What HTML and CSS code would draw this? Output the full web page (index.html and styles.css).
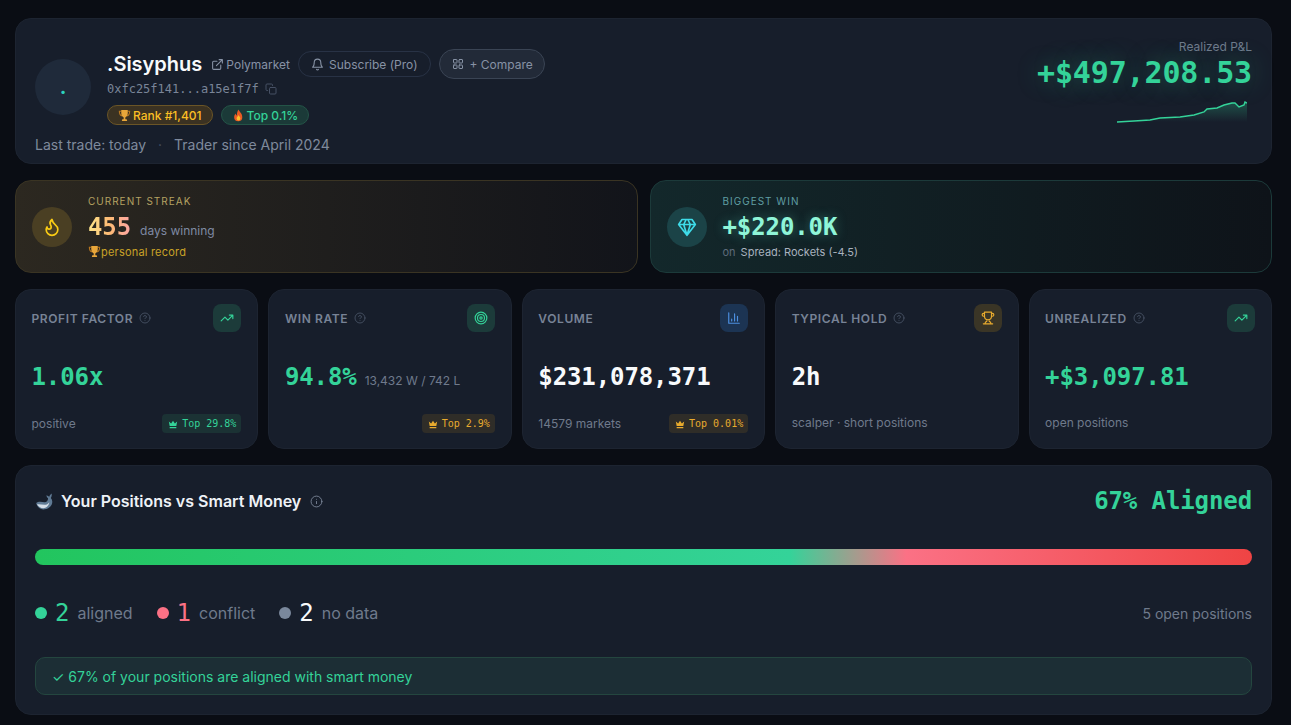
FILE: index.html
```html
<!DOCTYPE html>
<html lang="en">

<head>
    <meta charset="UTF-8">
    <title>.Sisyphus</title>
    <link rel="stylesheet" href="styles.css">
</head>

<body>
    <svg class="sprites" width="0" height="0">
        <symbol id="i-link" viewBox="0 0 24 24"><path d="M15 3h6v6M10 14 21 3M18 13v6a2 2 0 0 1-2 2H5a2 2 0 0 1-2-2V8a2 2 0 0 1 2-2h6" /></symbol>
        <symbol id="i-bell" viewBox="0 0 24 24"><path d="M6 8a6 6 0 0 1 12 0c0 7 3 9 3 9H3s3-2 3-9M10.3 21a1.94 1.94 0 0 0 3.4 0" /></symbol>
        <symbol id="i-grid" viewBox="0 0 24 24"><rect x="3" y="3" width="7" height="7" rx="1" /><rect x="14" y="3" width="7" height="7" rx="1" /><rect x="3" y="14" width="7" height="7" rx="1" /><rect x="14" y="14" width="7" height="7" rx="1" /></symbol>
        <symbol id="i-copy" viewBox="0 0 24 24"><rect x="9" y="9" width="13" height="13" rx="2" /><path d="M5 15H4a2 2 0 0 1-2-2V4a2 2 0 0 1 2-2h9a2 2 0 0 1 2 2v1" /></symbol>
        <symbol id="i-flame" viewBox="0 0 24 24"><path d="M8.5 14.5A2.5 2.5 0 0 0 11 12c0-1.38-.5-2-1-3-1.072-2.143-.224-4.054 2-6 .5 2.5 2 4.9 4 6.5 2 1.6 3 3.5 3 5.5a7 7 0 1 1-14 0c0-1.153.433-2.294 1-3a2.5 2.5 0 0 0 2.5 2.5z" /></symbol>
        <symbol id="i-gem" viewBox="0 0 24 24"><path d="M6 3h12l4 6-10 13L2 9ZM11 3 8 9l4 13 4-13-3-6M2 9h20" /></symbol>
        <symbol id="i-trend" viewBox="0 0 24 24"><path d="M22 7l-8.5 8.5-5-5L2 17M16 7h6v6" /></symbol>
        <symbol id="i-target" viewBox="0 0 24 24"><circle cx="12" cy="12" r="10" /><circle cx="12" cy="12" r="6" /><circle cx="12" cy="12" r="2" /></symbol>
        <symbol id="i-bars" viewBox="0 0 24 24"><path d="M3 3v18h18M18 17V9M13 17V5M8 17v-3" /></symbol>
        <symbol id="i-trophy" viewBox="0 0 24 24"><path d="M6 9H4.500a2.500 2.500 0 0 1 0-5H6M18 9h1.500a2.500 2.500 0 0 0 0-5H18M4 22h16M10 14.660V17c0 .55-.47.98-.97 1.210C7.850 18.750 7 20.240 7 22M14 14.660V17c0 .55.47.98.97 1.210C16.150 18.750 17 20.240 17 22M18 2H6v7a6 6 0 0 0 12 0V2Z" /></symbol>
        <symbol id="i-help" viewBox="0 0 24 24"><circle cx="12" cy="12" r="10" /><path d="M9.090 9a3 3 0 0 1 5.830 1c0 2-3 3-3 3M12 17h.01" /></symbol>
        <symbol id="i-info" viewBox="0 0 24 24"><circle cx="12" cy="12" r="10" /><path d="M12 16v-4M12 8h.01" /></symbol>
        <symbol id="e-crown" viewBox="0 0 24 24"><path class="solid" d="M2 6l5.500 5L12 4l4.500 7L22 6l-2 11H4zM4 19h16v3H4z" /></symbol>
        <symbol id="e-trophy" viewBox="0 0 24 24"><path class="e-handle" d="M6 4H2.500c0 5 1.500 8 5.500 9M18 4h3.500c0 5-1.500 8-5.500 9" /><path class="e-gold" d="M6 2h12v6c0 4-2.500 7-4.500 7.500V19H16l1 3H7l1-3h2.500v-3.500C8.500 15 6 12 6 8z" /></symbol>
        <symbol id="e-fire" viewBox="0 0 24 24"><path class="e-red" d="M12 1c1 4 7 7 7 14a7.500 7.500 0 0 1-15 0c0-3 1.500-5 3-6.500 0 2 .8 3 2 3.500C9 8 10 4 12 1z" /><path class="e-yellow" d="M12 11c.5 2 3.500 3.500 3.500 6.500a3.500 3.500 0 0 1-7 0c0-2.500 2.500-4 3.500-6.500z" /></symbol>
        <symbol id="e-whale" viewBox="0 0 24 24"><path class="e-blue" d="M1.500 14C4 11.500 9 12.500 12 13c3 0 4.500-2 4.500-5-1-1-2-2.500-2-4 1.500.5 2.500 1 3.500 2 .5-1.500 1.500-3 3-4 .5 2 0 4-1 5.500 2 2.500 2.500 5.500 1 8.500-2 4-6 6-10.500 6S2.500 18.500 1.500 14z" /><path class="e-belly" d="M2.500 15.500c3.500-.5 7.500 1 11.500.5 2-.2 3-1.500 4-3 0 4-4 7.500-7.500 7.500s-6.500-2-8-5z" /></symbol>
    </svg>

    <div class="page">
        <header class="card profile">
            <div class="profile-left">
                <div class="profile-main">
                    <div class="avatar">.</div>
                    <div class="profile-info">
                        <div class="profile-name-row">
                            <h1 class="profile-name">.Sisyphus</h1>
                            <span class="profile-link"><svg class="icon icon-13"><use href="#i-link" /></svg>Polymarket</span>
                            <span class="btn btn-sub"><svg class="icon icon-13"><use href="#i-bell" /></svg>Subscribe (Pro)</span>
                            <span class="btn btn-compare"><svg class="icon icon-12"><use href="#i-grid" /></svg>+ Compare</span>
                        </div>
                        <div class="profile-address">0xfc25f141...a15e1f7f <svg class="icon icon-12"><use href="#i-copy" /></svg></div>
                        <div class="profile-badges">
                            <span class="badge badge-amber"><svg class="emoji"><use href="#e-trophy" /></svg>Rank #1,401</span>
                            <span class="badge badge-green"><svg class="emoji"><use href="#e-fire" /></svg>Top 0.1%</span>
                        </div>
                    </div>
                </div>
                <div class="profile-meta"><span>Last trade: today</span><span class="meta-dot">·</span><span>Trader since April 2024</span></div>
            </div>
            <div class="pnl">
                <div class="pnl-label">Realized P&amp;L</div>
                <div class="pnl-value">+$497,208.53</div>
                <svg class="pnl-chart" width="130" height="28" viewBox="0 0 130 28">
                    <defs>
                        <linearGradient id="pnlFill" x1="0" y1="0" x2="0" y2="1">
                            <stop offset="0" stop-color="#34d399" stop-opacity=".28" />
                            <stop offset="1" stop-color="#34d399" stop-opacity="0" />
                        </linearGradient>
                    </defs>
                    <polygon fill="url(#pnlFill)" points="0,21 17,20 33,19 43,17 63,16 77,14 87,11 90,8 100,7 107,4 115,2 118,2 122,6 127,4 128,1 130,2 130,21" />
                    <polyline fill="none" stroke="#34d399" stroke-width="1.4" points="0,21 17,20 33,19 43,17 63,16 77,14 87,11 90,8 100,7 107,4 115,2 118,2 122,6 127,4 128,1 130,2" />
                </svg>
            </div>
        </header>

        <section class="highlights">
            <div class="highlight highlight-streak">
                <div class="highlight-icon"><svg class="icon icon-20"><use href="#i-flame" /></svg></div>
                <div>
                    <div class="highlight-label">CURRENT STREAK</div>
                    <div class="highlight-value"><span class="streak-num">455</span><span class="streak-unit">days winning</span></div>
                    <div class="highlight-note"><svg class="emoji"><use href="#e-trophy" /></svg>personal record</div>
                </div>
            </div>
            <div class="highlight highlight-win">
                <div class="highlight-icon"><svg class="icon icon-20"><use href="#i-gem" /></svg></div>
                <div>
                    <div class="highlight-label">BIGGEST WIN</div>
                    <div class="highlight-value"><span class="win-num">+$220.0K</span></div>
                    <div class="highlight-note"><span class="win-on">on</span>Spread: Rockets (-4.5)</div>
                </div>
            </div>
        </section>

        <section class="stats">
            <div class="card stat">
                <div class="stat-top">
                    <div class="stat-label">PROFIT FACTOR <svg class="icon icon-12"><use href="#i-help" /></svg></div>
                    <div class="stat-icon tint-green"><svg class="icon icon-14"><use href="#i-trend" /></svg></div>
                </div>
                <div class="stat-value green">1.06x</div>
                <div class="stat-foot"><span>positive</span><span class="rank-tag tag-green"><svg class="crown"><use href="#e-crown" /></svg>Top 29.8%</span></div>
            </div>
            <div class="card stat">
                <div class="stat-top">
                    <div class="stat-label">WIN RATE <svg class="icon icon-12"><use href="#i-help" /></svg></div>
                    <div class="stat-icon tint-green"><svg class="icon icon-14"><use href="#i-target" /></svg></div>
                </div>
                <div class="stat-value green">94.8%<span class="stat-extra">13,432 W / 742 L</span></div>
                <div class="stat-foot"><span></span><span class="rank-tag tag-amber"><svg class="crown"><use href="#e-crown" /></svg>Top 2.9%</span></div>
            </div>
            <div class="card stat">
                <div class="stat-top">
                    <div class="stat-label">VOLUME</div>
                    <div class="stat-icon tint-blue"><svg class="icon icon-14"><use href="#i-bars" /></svg></div>
                </div>
                <div class="stat-value">$231,078,371</div>
                <div class="stat-foot"><span>14579 markets</span><span class="rank-tag tag-amber"><svg class="crown"><use href="#e-crown" /></svg>Top 0.01%</span></div>
            </div>
            <div class="card stat">
                <div class="stat-top">
                    <div class="stat-label">TYPICAL HOLD <svg class="icon icon-12"><use href="#i-help" /></svg></div>
                    <div class="stat-icon tint-amber"><svg class="icon icon-14"><use href="#i-trophy" /></svg></div>
                </div>
                <div class="stat-value">2h</div>
                <div class="stat-foot stat-foot-plain"><span>scalper · short positions</span></div>
            </div>
            <div class="card stat">
                <div class="stat-top">
                    <div class="stat-label">UNREALIZED <svg class="icon icon-12"><use href="#i-help" /></svg></div>
                    <div class="stat-icon tint-green"><svg class="icon icon-14"><use href="#i-trend" /></svg></div>
                </div>
                <div class="stat-value green">+$3,097.81</div>
                <div class="stat-foot stat-foot-plain"><span>open positions</span></div>
            </div>
        </section>

        <section class="card smart">
            <div class="smart-head">
                <h2 class="smart-title"><svg class="emoji-lg"><use href="#e-whale" /></svg>Your Positions vs Smart Money<svg class="icon icon-13 smart-info"><use href="#i-info" /></svg></h2>
                <div class="smart-score">67% Aligned</div>
            </div>
            <div class="smart-bar"></div>
            <div class="smart-legend">
                <div class="legend-item"><span class="legend-dot dot-green"></span><span class="legend-num green">2</span>aligned</div>
                <div class="legend-item"><span class="legend-dot dot-red"></span><span class="legend-num red">1</span>conflict</div>
                <div class="legend-item"><span class="legend-dot dot-gray"></span><span class="legend-num">2</span>no data</div>
                <div class="legend-total">5 open positions</div>
            </div>
            <div class="smart-note">✓ 67% of your positions are aligned with smart money</div>
        </section>
    </div>
</body>

</html>
```

FILE: styles.css
```css
body {
    margin: 0;
    background: #0a0d14;
    font-family: "Inter", "Noto Sans", sans-serif;
    color: #f8fafc;
}

.sprites {
    position: absolute;
}

.page {
    display: flex;
    flex-direction: column;
    gap: 16px;
    padding: 18px 19px 10px 15px;
}

.card {
    background: #171e2b;
    border: 1px solid #1d2431;
    border-radius: 16px;
    box-sizing: border-box;
}

.icon {
    fill: none;
    stroke: currentColor;
    stroke-width: 2;
    stroke-linecap: round;
    stroke-linejoin: round;
    flex: none;
}

.icon-12 { width: 12px; height: 12px; }
.icon-13 { width: 13px; height: 13px; }
.icon-14 { width: 14px; height: 14px; }
.icon-20 { width: 20px; height: 20px; }

.emoji {
    width: 13px;
    height: 13px;
    flex: none;
}

.emoji-lg {
    width: 19px;
    height: 19px;
    flex: none;
}

.e-gold { fill: #e8a63a; }
.e-handle { fill: none; stroke: #b9771f; stroke-width: 2; }
.e-red { fill: #ea5a24; }
.e-yellow { fill: #fbc02d; }
.e-blue { fill: #5f7a94; }
.e-belly { fill: #d5dee8; }
.solid { fill: currentColor; }

.green { color: #34d399; }
.red { color: #fb7185; }

/* profile header */
.profile {
    height: 146px;
    display: flex;
    justify-content: space-between;
    padding: 20px 19px 0;
}

.profile-left {
    padding-top: 10px;
}

.profile-main {
    display: flex;
    align-items: center;
    gap: 16px;
}

.avatar {
    width: 56px;
    height: 56px;
    border-radius: 50%;
    background: #1f2a3a;
    color: #2dd4bf;
    font-size: 20px;
    font-weight: 700;
    display: flex;
    align-items: center;
    justify-content: center;
}

.profile-name-row {
    display: flex;
    align-items: center;
    height: 30px;
}

.profile-name {
    margin: 0;
    font-size: 20px;
    font-weight: 600;
    color: #f8fafc;
}

.profile-link {
    display: flex;
    align-items: center;
    gap: 2px;
    margin-left: 9px;
    font-size: 12px;
    color: #8792a5;
}

.btn {
    display: flex;
    align-items: center;
    box-sizing: border-box;
    border-radius: 15px;
    font-size: 12px;
    color: #8792a5;
}

.btn-sub {
    height: 26px;
    margin-left: 8px;
    padding: 0 12px;
    gap: 5px;
    border: 1px solid #283245;
}

.btn-compare {
    height: 30px;
    margin-left: 8px;
    padding: 0 11px 0 12px;
    gap: 6px;
    border: 1px solid #3a4454;
    background: #222a38;
}

.profile-address {
    display: flex;
    align-items: center;
    gap: 6px;
    margin-top: 2px;
    height: 16px;
    font-family: "DejaVu Sans Mono", monospace;
    font-size: 12px;
    color: #7a8598;
}

.profile-address .icon {
    color: #465064;
}

.profile-badges {
    display: flex;
    gap: 8px;
    margin-top: 8px;
}

.badge {
    display: flex;
    align-items: center;
    gap: 2px;
    box-sizing: border-box;
    height: 20px;
    padding: 0 10px;
    border-radius: 10px;
    font-size: 12px;
    font-weight: 500;
}

.badge-amber {
    background: #3b3222;
    border: 1px solid #6b5526;
    color: #fbbf24;
}

.badge-green {
    background: #1b3a38;
    border: 1px solid #245447;
    color: #34d399;
}

.profile-meta {
    display: flex;
    gap: 12px;
    margin-top: 11px;
    font-size: 14px;
    color: #7f8a9c;
}

.meta-dot {
    color: #465064;
}

.pnl {
    display: flex;
    flex-direction: column;
    align-items: flex-end;
}

.pnl-label {
    font-size: 12px;
    color: #6f7a8c;
    line-height: 16px;
}

.pnl-value {
    font-family: "DejaVu Sans Mono", monospace;
    font-size: 30px;
    font-weight: 700;
    letter-spacing: -.15px;
    line-height: 36px;
    color: #34d399;
    text-shadow: 0 0 24px rgba(52, 211, 153, .35);
}

.pnl-chart {
    margin: 10px 5px 0 0;
}

/* streak + biggest win */
.highlights {
    display: grid;
    grid-template-columns: 1fr 1fr;
    gap: 12px;
}

.highlight {
    height: 93px;
    box-sizing: border-box;
    display: flex;
    align-items: center;
    gap: 16px;
    padding: 0 16px;
    border-radius: 16px;
}

.highlight-streak {
    background: linear-gradient(90deg, #2c2820, #12141a);
    border: 1px solid #3a3423;
}

.highlight-win {
    background: linear-gradient(90deg, #13282b, #0e1319);
    border: 1px solid #1c3a3a;
}

.highlight-icon {
    width: 40px;
    height: 40px;
    border-radius: 50%;
    display: flex;
    align-items: center;
    justify-content: center;
    flex: none;
}

.highlight-streak .highlight-icon {
    background: #4a3f23;
    color: #facc15;
}

.highlight-win .highlight-icon {
    background: #1b4347;
    color: #3edbe8;
}

.highlight-label {
    font-size: 10px;
    letter-spacing: 1px;
    line-height: 14px;
}

.highlight-streak .highlight-label { color: #b5a262; }
.highlight-win .highlight-label { color: #5f9ea3; }

.highlight-value {
    display: flex;
    align-items: baseline;
    height: 30px;
    line-height: 30px;
    margin-top: 4px;
    font-family: "DejaVu Sans Mono", monospace;
    font-size: 24px;
    font-weight: 700;
    letter-spacing: -.1px;
}

.streak-num {
    background: linear-gradient(90deg, #fde68a, #fdba74, #fca5a5);
    -webkit-background-clip: text;
    background-clip: text;
    color: transparent;
}

.streak-unit {
    margin-left: 9px;
    font-family: "Inter", sans-serif;
    font-size: 12px;
    font-weight: 400;
    letter-spacing: 0;
    color: #7f8aa3;
}

.win-num {
    color: #8ff5d8;
    text-shadow: 0 0 12px rgba(94, 234, 212, .35);
}

.highlight-note {
    display: flex;
    align-items: center;
    margin-top: 2px;
    font-size: 11px;
    line-height: 16px;
}

.highlight-streak .highlight-note {
    color: #c9a227;
    letter-spacing: .2px;
}

.highlight-win .highlight-note { color: #a9b2bf; }

.win-on {
    margin-right: 5px;
    color: #5e6b7a;
}

/* stat cards */
.stats {
    display: grid;
    grid-template-columns: repeat(5, 1fr);
    gap: 10px;
}

.stat {
    height: 160px;
    display: flex;
    flex-direction: column;
    padding: 14px 16px 15px 15.5px;
}

.stat-top {
    display: flex;
    align-items: center;
    justify-content: space-between;
}

.stat-label {
    display: flex;
    align-items: center;
    gap: 6px;
    font-size: 12px;
    font-weight: 600;
    letter-spacing: .6px;
    color: #788396;
}

.stat-label .icon {
    color: #4d586b;
    stroke-width: 1.6;
}

.stat-icon {
    width: 28px;
    height: 28px;
    border-radius: 8px;
    display: flex;
    align-items: center;
    justify-content: center;
}

.tint-green { background: #1c3b3a; color: #34d399; }
.tint-blue { background: #1c3453; color: #4c8fe0; }
.tint-amber { background: #3a3526; color: #e8ab2e; }

.stat-value {
    display: flex;
    align-items: baseline;
    margin-top: 29px;
    height: 32px;
    line-height: 32px;
    font-family: "DejaVu Sans Mono", monospace;
    font-size: 24px;
    font-weight: 700;
    letter-spacing: -.1px;
}

.stat-value:not(.green) {
    color: #f8fafc;
}

.stat-extra {
    margin-left: 8px;
    font-family: "Inter", sans-serif;
    font-size: 12px;
    font-weight: 400;
    letter-spacing: 0;
    color: #6f7a8c;
}

.stat-foot {
    display: flex;
    align-items: center;
    justify-content: space-between;
    margin-top: auto;
    font-size: 12px;
    color: #6f7a8c;
}

.stat-foot-plain {
    margin-bottom: 3px;
}

.rank-tag {
    display: flex;
    align-items: center;
    gap: 4px;
    height: 19px;
    padding: 0 5px 0 6px;
    border-radius: 4px;
    font-family: "DejaVu Sans Mono", monospace;
    font-size: 10px;
}

.crown {
    width: 10px;
    height: 10px;
}

.tag-green {
    background: #1b3234;
    color: #34d399;
}

.tag-amber {
    background: #2f2d28;
    color: #e8ab2e;
}

/* smart money */
.smart {
    height: 250px;
    padding: 19px;
}

.smart-head {
    display: flex;
    align-items: center;
    justify-content: space-between;
    height: 32px;
}

.smart-title {
    display: flex;
    align-items: center;
    gap: 7px;
    margin: 0;
    font-size: 16px;
    font-weight: 600;
    color: #eef2f7;
}

.smart-info {
    margin-left: 2px;
    color: #7f8a9c;
    stroke-width: 1.6;
}

.smart-score {
    font-family: "DejaVu Sans Mono", monospace;
    font-size: 24px;
    font-weight: 700;
    letter-spacing: -.1px;
    color: #34d399;
}

.smart-bar {
    height: 16px;
    margin-top: 32px;
    border-radius: 8px;
    background: linear-gradient(90deg, #22c55e 0, #34d399 62%, #fb7185 71.6%, #ef4444 100%);
}

.smart-legend {
    display: flex;
    align-items: center;
    gap: 24px;
    margin-top: 32px;
    height: 32px;
    font-size: 16px;
    color: #6f7a8c;
}

.legend-item {
    display: flex;
    align-items: center;
}

.legend-dot {
    width: 12px;
    height: 12px;
    border-radius: 50%;
    margin-right: 8px;
}

.dot-green { background: #34d399; }
.dot-red { background: #fb7185; }
.dot-gray { background: #7a889c; }

.legend-num {
    margin-right: 8px;
    font-family: "DejaVu Sans Mono", monospace;
    font-size: 24px;
    color: #f8fafc;
}

.legend-num.green { color: #34d399; }
.legend-num.red { color: #fb7185; }

.legend-total {
    margin-left: auto;
    font-size: 14px;
    color: #6f7a8c;
}

.smart-note {
    box-sizing: border-box;
    height: 38px;
    margin-top: 28px;
    padding: 0 16px;
    display: flex;
    align-items: center;
    border: 1px solid #24463f;
    border-radius: 10px;
    background: #1c2e35;
    font-size: 14px;
    color: #34d399;
}
```
